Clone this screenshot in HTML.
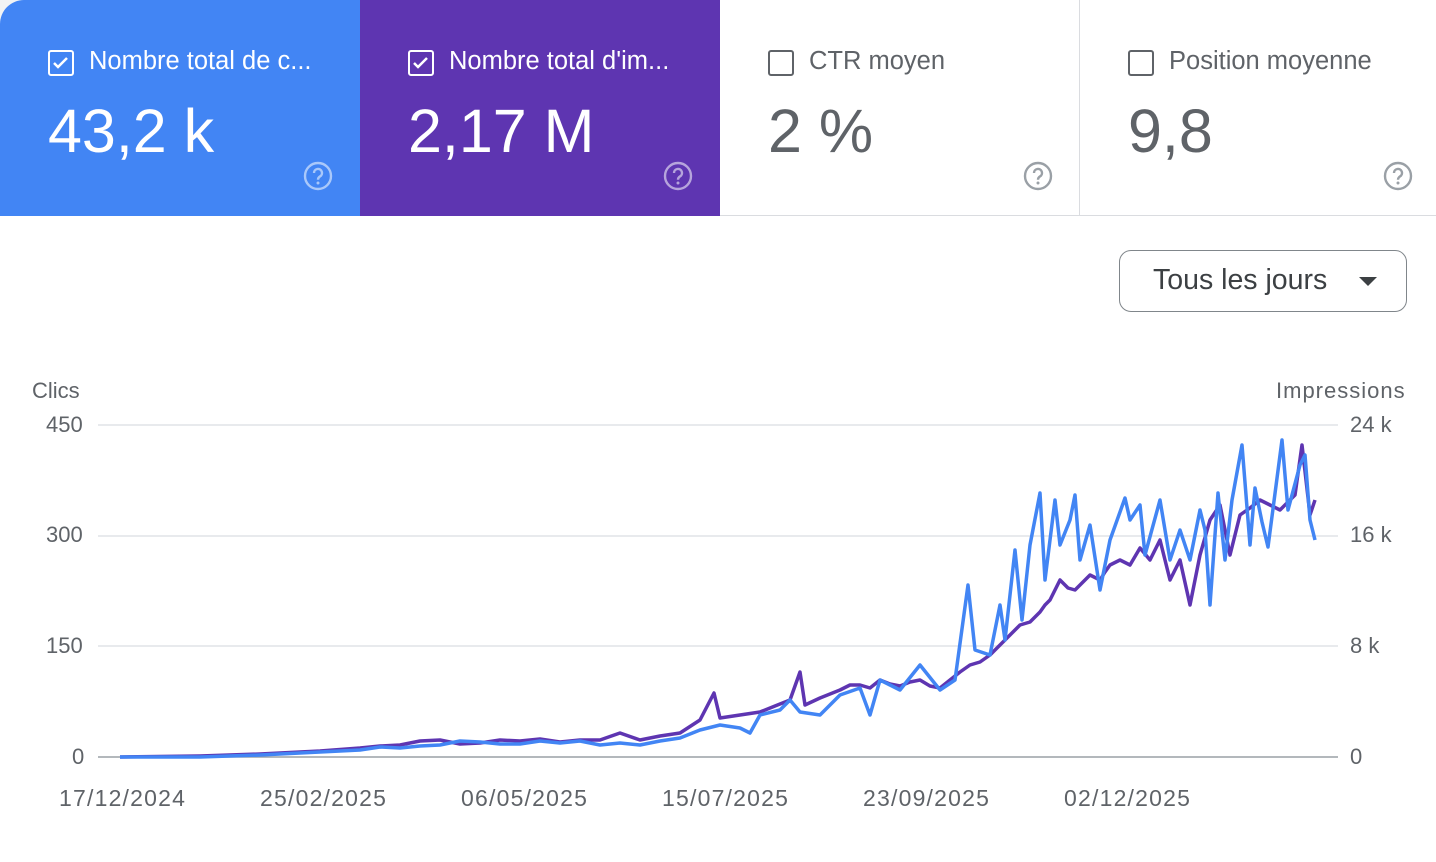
<!DOCTYPE html>
<html><head><meta charset="utf-8"><style>
*{margin:0;padding:0;box-sizing:border-box}
body{width:1436px;height:862px;background:#f1f3f4;font-family:"Liberation Sans",Arial,sans-serif;overflow:hidden}
.page{position:absolute;left:0;top:0;width:1436px;height:862px;background:#fff;border-radius:24px 0 0 0;overflow:hidden}
.card{position:absolute;top:0;width:360px;height:216px}
.c1{left:0;background:#4285f4;color:#fff}
.c2{left:360px;background:#5e35b1;color:#fff}
.c3{left:720px;border-right:1px solid #dadce0;border-bottom:1px solid #dadce0;color:#5f6368}
.c4{left:1080px;width:356px;border-bottom:1px solid #dadce0;color:#5f6368}
.cb{position:absolute;left:48px;top:50px;width:26px;height:26px;border:2.5px solid currentColor;border-radius:3px}
.lbl{position:absolute;left:89px;top:47px;font-size:25.5px}
.val{position:absolute;left:48px;top:96px;font-size:61px}
.q{position:absolute;left:303px;top:161px}
.dd{position:absolute;left:1119px;top:250px;width:288px;height:62px;border:1.5px solid #80868b;border-radius:12px;font-size:28.5px;color:#3c4043}
.ax{position:absolute;font-size:22px;color:#5f6368}
.dt{position:absolute;font-size:23px;color:#5f6368;top:785px;letter-spacing:1.2px}
</style></head><body><div class="page">
<div class="card c1"><div class="cb"><svg width="21" height="21" viewBox="0 0 21 21" style="position:absolute;left:0;top:0"><path d="M4 11 l4 4 l9 -9" stroke="#fff" stroke-width="2.5" fill="none"/></svg></div><div class="lbl">Nombre total de c...</div><div class="val">43,2 k</div>
<svg class="q" width="30" height="30" viewBox="0 0 30 30"><circle cx="15" cy="15" r="13" stroke="rgba(255,255,255,.55)" stroke-width="2.4" fill="none"/><path d="M11 12 a4 4 0 1 1 6 3.4 c-1.5 1 -2 1.8 -2 3.4" stroke="rgba(255,255,255,.55)" stroke-width="2.4" fill="none"/><circle cx="15" cy="22" r="1.5" fill="rgba(255,255,255,.55)"/></svg></div>
<div class="card c2"><div class="cb"><svg width="21" height="21" viewBox="0 0 21 21" style="position:absolute;left:0;top:0"><path d="M4 11 l4 4 l9 -9" stroke="#fff" stroke-width="2.5" fill="none"/></svg></div><div class="lbl">Nombre total d'im...</div><div class="val">2,17 M</div>
<svg class="q" width="30" height="30" viewBox="0 0 30 30"><circle cx="15" cy="15" r="13" stroke="rgba(255,255,255,.55)" stroke-width="2.4" fill="none"/><path d="M11 12 a4 4 0 1 1 6 3.4 c-1.5 1 -2 1.8 -2 3.4" stroke="rgba(255,255,255,.55)" stroke-width="2.4" fill="none"/><circle cx="15" cy="22" r="1.5" fill="rgba(255,255,255,.55)"/></svg></div>
<div class="card c3"><div class="cb"></div><div class="lbl">CTR moyen</div><div class="val">2 %</div>
<svg class="q" width="30" height="30" viewBox="0 0 30 30"><circle cx="15" cy="15" r="13" stroke="#9aa0a6" stroke-width="2.4" fill="none"/><path d="M11 12 a4 4 0 1 1 6 3.4 c-1.5 1 -2 1.8 -2 3.4" stroke="#9aa0a6" stroke-width="2.4" fill="none"/><circle cx="15" cy="22" r="1.5" fill="#9aa0a6"/></svg></div>
<div class="card c4"><div class="cb"></div><div class="lbl">Position moyenne</div><div class="val">9,8</div>
<svg class="q" width="30" height="30" viewBox="0 0 30 30"><circle cx="15" cy="15" r="13" stroke="#9aa0a6" stroke-width="2.4" fill="none"/><path d="M11 12 a4 4 0 1 1 6 3.4 c-1.5 1 -2 1.8 -2 3.4" stroke="#9aa0a6" stroke-width="2.4" fill="none"/><circle cx="15" cy="22" r="1.5" fill="#9aa0a6"/></svg></div>
<div class="dd"><span style="position:absolute;left:33px;top:13px">Tous les jours</span><svg style="position:absolute;left:239px;top:26px" width="20" height="10"><path d="M0 0 L18 0 L9 9Z" fill="#3c4043"/></svg></div>
<div class="ax" style="left:32px;top:378px">Clics</div>
<div class="ax" style="left:1276px;top:378px;letter-spacing:1px">Impressions</div>
<div class="ax" style="left:46px;top:412px">450</div>
<div class="ax" style="left:46px;top:522px">300</div>
<div class="ax" style="left:46px;top:633px">150</div>
<div class="ax" style="left:72px;top:744px">0</div>
<div class="ax" style="left:1350px;top:412px">24 k</div>
<div class="ax" style="left:1350px;top:522px">16 k</div>
<div class="ax" style="left:1350px;top:633px">8 k</div>
<div class="ax" style="left:1350px;top:744px">0</div>
<div class="dt" style="left:59px">17/12/2024</div>
<div class="dt" style="left:260px">25/02/2025</div>
<div class="dt" style="left:461px">06/05/2025</div>
<div class="dt" style="left:662px">15/07/2025</div>
<div class="dt" style="left:863px">23/09/2025</div>
<div class="dt" style="left:1064px">02/12/2025</div>
<svg style="position:absolute;left:0;top:0" width="1436" height="862">
<g stroke="#e8eaed" stroke-width="2"><line x1="98" y1="425" x2="1338" y2="425"/><line x1="98" y1="536" x2="1338" y2="536"/><line x1="98" y1="646" x2="1338" y2="646"/></g>
<line x1="98" y1="757" x2="1338" y2="757" stroke="#9aa0a6" stroke-width="1.5"/>
<polyline fill="none" stroke="#5e35b1" stroke-width="3.5" stroke-linejoin="round" points="120,757 200,756 260,754 320,751 360,748 380,746 400,745 420,741 440,740 460,744 480,743 500,740 520,741 540,739 560,742 580,740 600,740 620,733 640,740 660,736 680,733 700,720 714,693 720,718 740,715 760,712 775,706 790,700 800,672 805,705 820,698 840,690 850,685 860,685 870,688 880,680 890,684 900,686 910,682 920,680 930,686 940,688 950,680 960,672 970,665 980,662 990,655 1000,645 1010,635 1020,625 1030,622 1040,612 1045,605 1050,600 1060,580 1068,588 1075,590 1082,583 1090,575 1100,580 1105,572 1110,565 1120,560 1130,565 1140,548 1150,560 1160,540 1170,580 1180,560 1190,605 1200,555 1210,520 1220,505 1230,555 1240,515 1250,508 1260,500 1270,505 1280,510 1288,502 1295,495 1302,445 1310,515 1315,500"/>
<polyline fill="none" stroke="#4285f4" stroke-width="3.5" stroke-linejoin="round" points="120,757 200,757 260,755 320,752 360,750 380,747 400,748 420,746 440,745 460,741 480,742 500,744 520,744 540,741 560,743 580,741 600,745 620,743 640,745 660,741 680,738 700,730 720,725 740,728 750,733 760,715 780,710 790,700 800,712 820,715 840,695 860,688 870,715 880,680 900,690 920,665 940,690 955,680 968,585 975,650 990,655 1000,605 1005,640 1015,550 1022,620 1030,545 1040,493 1045,580 1055,500 1060,545 1070,520 1075,495 1080,560 1090,525 1100,590 1110,540 1125,498 1130,520 1140,505 1145,555 1160,500 1170,560 1180,530 1190,560 1200,510 1205,530 1210,605 1218,493 1225,560 1232,500 1242,445 1250,545 1255,488 1262,522 1268,547 1282,440 1288,510 1300,465 1305,455 1310,520 1315,540"/>
</svg>
</div></body></html>
